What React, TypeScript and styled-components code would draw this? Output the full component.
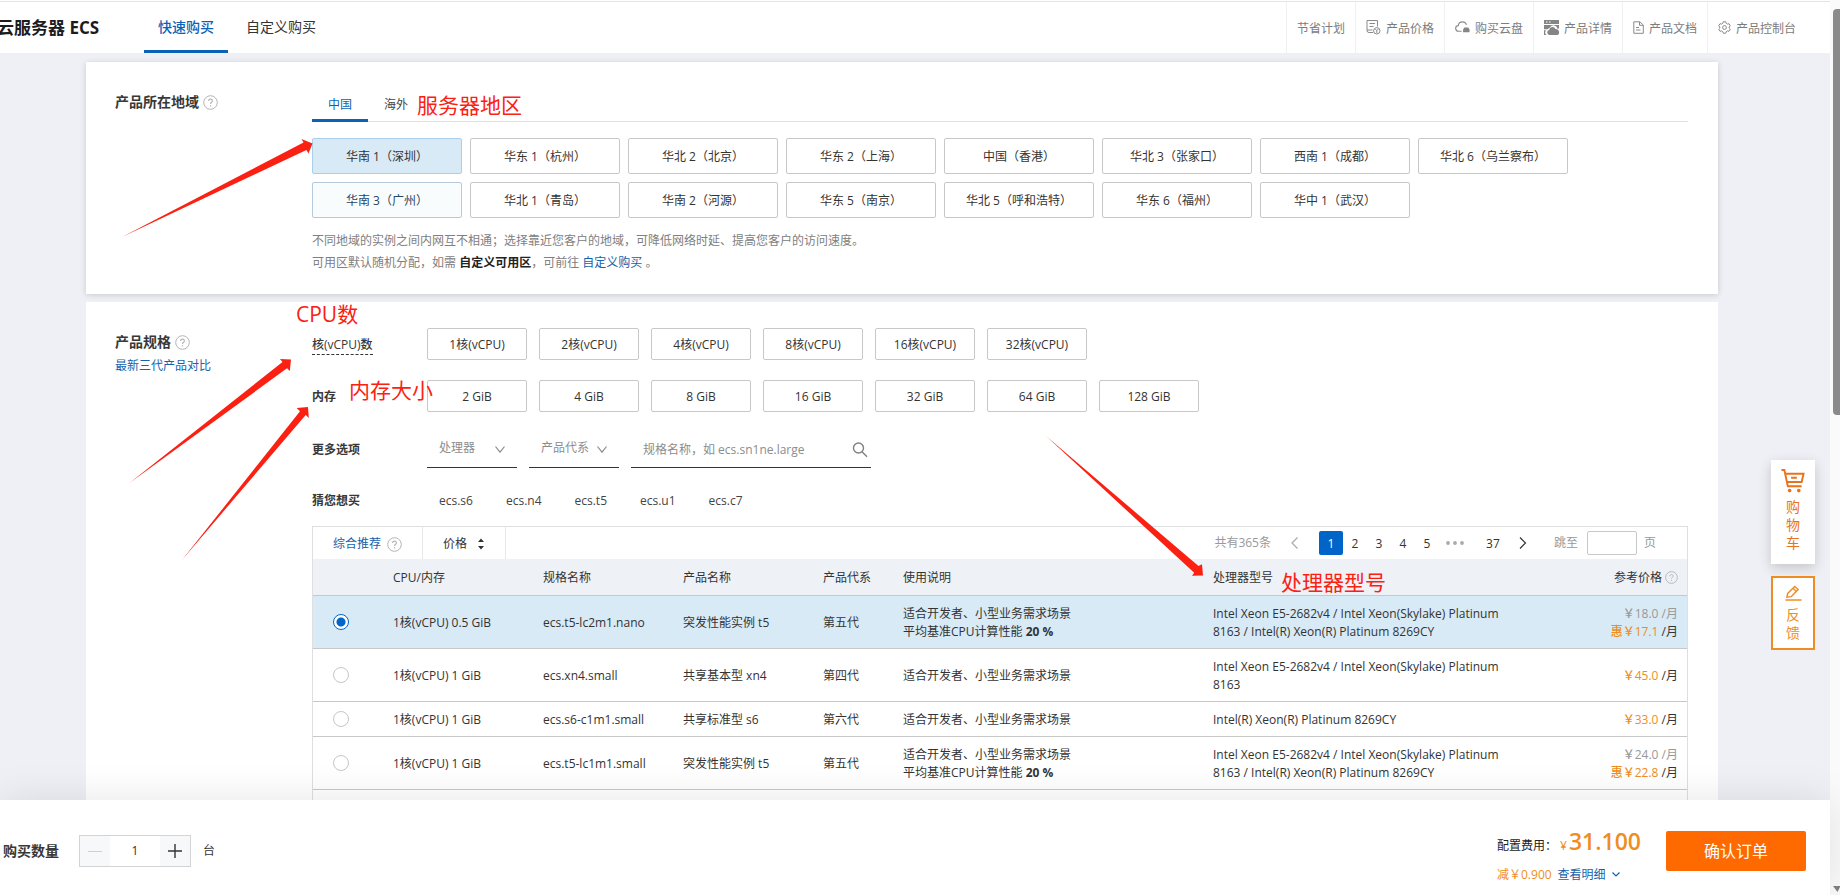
import React, { useState } from "react";
import styled, { createGlobalStyle, css } from "styled-components";

const color = {
  page: "#eff0f5",
  blue: "#0c62b5",
  link: "#1662ac",
  active: "#0064c8",
  orange: "#ff6a00",
  amber: "#ef8d22",
  red: "#fb2112",
  text: "#333333",
  muted: "#808080",
  border: "#c8c8c8",
  line: "#dedfe1",
  selected: "#d8eaf6",
};

const GlobalStyle = createGlobalStyle`
  * { box-sizing: border-box; }
  body {
    margin: 0;
    font: 12px/18px "Open Sans", "Noto Sans CJK SC", sans-serif;
    color: ${color.text};
    background: #ffffff;
  }
  button, input, select { font: inherit; color: inherit; }
  a { color: ${color.link}; text-decoration: none; }
`;

const Shell = styled.div`
  position: relative;
  display: grid;
  grid-template-columns: 1fr 10px;
  height: 100vh;
  overflow: hidden;
`;

const Page = styled.div`
  display: flex;
  flex-direction: column;
  min-width: 0;
  min-height: 0;
`;

/* ---------- header ---------- */

const Header = styled.header`
  display: flex;
  flex: none;
  height: 52px;
  margin-top: 1px;
  margin-bottom: -1px;
  border-top: 1px solid #e4e4e4;
  background: #fff;
  position: relative;
`;

const Title = styled.h1`
  width: 144px;
  margin: 0;
  font-size: 17px;
  line-height: 51px;
  font-weight: 700;
  color: #1c1c1c;
  white-space: nowrap;
  text-indent: -3px;
`;

const TopTabs = styled.nav`
  display: flex;
  gap: 4px;
  flex: 1;
`;

const TopTab = styled.a<{ $active?: boolean }>`
  padding: 0 14px;
  font-size: 14px;
  line-height: 50px;
  height: 51px;
  color: ${(p) => (p.$active ? color.blue : color.text)};
  font-weight: ${(p) => (p.$active ? 500 : 400)};
  border-bottom: 3px solid ${(p) => (p.$active ? color.blue : "transparent")};
`;

const TopLinks = styled.nav`
  display: flex;
  padding-right: 24px;
`;

const TopLink = styled.a`
  display: flex;
  align-items: center;
  gap: 5px;
  padding: 2px 10px 0;
  border-left: 1px solid #f0f0f0;
  color: #7c7c7c;
`;

const LinkIcon = styled.svg`
  flex: none;
  margin-bottom: 3px;
`;

/* ---------- cards ---------- */

const Main = styled.main`
  flex: 1;
  min-height: 0;
  overflow: hidden;
  display: flex;
  flex-direction: column;
  gap: 8px;
  padding: 10px 112px 0 86px;
  background: ${color.page};
`;

const Card = styled.section<{ $last?: boolean }>`
  display: grid;
  grid-template-columns: 197px minmax(0, 1fr);
  flex: none;
  padding: ${(p) => (p.$last ? "26px 30px 0 29px" : "28px 30px 20px 29px")};
  background: #fff;
  box-shadow: ${(p) => (p.$last ? "none" : "0 1px 6px rgba(0, 0, 0, 0.16)")};
`;

const CardSide = styled.div<{ $low?: boolean }>`
  padding-top: ${(p) => (p.$low ? 4 : 2)}px;
`;

const CardHeading = styled.h2`
  display: flex;
  align-items: center;
  gap: 4px;
  margin: 0;
  font-size: 14px;
  line-height: 20px;
  font-weight: 700;
  color: #383838;
`;

const SideLink = styled.a`
  display: block;
  margin-top: 5px;
`;

const RegionTabs = styled.div`
  display: flex;
  height: 32px;
  border-bottom: 1px solid ${color.line};
`;

const RegionTab = styled.button<{ $active?: boolean }>`
  width: 56px;
  height: 32px;
  padding: 0;
  border: 0;
  border-bottom: 3px solid ${(p) => (p.$active ? color.blue : "transparent")};
  background: none;
  color: ${(p) => (p.$active ? color.blue : "#444")};
`;

const RegionGrid = styled.div`
  display: grid;
  grid-template-columns: repeat(auto-fill, 150px);
  gap: 8px;
  margin-top: 16px;
`;

const optionButton = css`
  padding: 2px 0 0;
  border: 1px solid ${color.border};
  border-radius: 2px;
  background: #fff;
  color: #333;
`;

const RegionButton = styled.button<{ $state?: "on" | "hover" }>`
  ${optionButton}
  height: 36px;
  ${(p) =>
    p.$state === "on" &&
    css`
      background: ${color.selected};
      border-color: #a9cfea;
    `}
  ${(p) =>
    p.$state === "hover" &&
    css`
      background: #f9fcfd;
      border-color: #b5cbdd;
      color: #24466b;
    `}
`;

const Note = styled.div`
  margin-top: 12px;
  line-height: 22px;
  color: ${color.muted};
  p { margin: 0; }
  strong { color: #222; }
`;

/* ---------- spec filters ---------- */

const FilterRow = styled.div`
  display: grid;
  grid-template-columns: 115px minmax(0, 1fr);
  align-items: center;
  height: 32px;
  margin-bottom: 20px;
`;

const FilterName = styled.span`
  padding-top: 2px;
  font-weight: 600;
  color: #383838;
`;

const Dashed = styled.span`
  border-bottom: 1px dashed #333;
  font-weight: 500;
  padding-bottom: 1px;
`;

const Options = styled.div<{ $under?: boolean }>`
  display: flex;
  gap: 12px;
  ${(p) => p.$under && "align-self: end; margin-bottom: -2px;"}
`;

const SpecButton = styled.button`
  ${optionButton}
  width: 100px;
  height: 32px;
`;

const SelectBox = styled.label`
  position: relative;
  display: flex;
  width: 90px;
  height: 36px;
  border-bottom: 1px solid #333;
  svg {
    position: absolute;
    right: 12px;
    top: 14px;
    pointer-events: none;
  }
`;

const PlainSelect = styled.select`
  appearance: none;
  width: 100%;
  height: 32px;
  padding: 0 22px 0 12px;
  border: 0;
  background: none;
  color: #8c8c8c;
`;

const SearchBox = styled.label`
  display: flex;
  align-items: center;
  width: 240px;
  height: 36px;
  padding: 0 3px 0 12px;
  border-bottom: 1px solid #333;
  input {
    flex: 1;
    min-width: 0;
    padding: 0;
    border: 0;
    outline: 0;
    background: none;
  }
  input::placeholder { color: #8c8c8c; opacity: 1; }
`;

const Guess = styled.button`
  padding: 0;
  border: 0;
  background: none;
  color: #444;
`;

const Guesses = styled.div`
  display: flex;
  gap: 33px;
  padding: 2px 0 0 12px;
`;

/* ---------- product table ---------- */

const TableFrame = styled.div`
  margin-top: -10px;
  padding-bottom: 40px;
  border: 1px solid ${color.line};
  border-bottom: 0;
`;

const TableBar = styled.div`
  display: flex;
  height: 32px;
`;

const SortCell = styled.button<{ $active?: boolean }>`
  display: flex;
  align-items: center;
  gap: ${(p) => (p.$active ? 6 : 10)}px;
  padding: 2px 20px 0;
  border: 0;
  border-right: 1px solid #e6e7e9;
  background: none;
  color: ${(p) => (p.$active ? color.link : "#333")};
`;

const Pager = styled.nav`
  display: flex;
  align-items: center;
  margin-left: auto;
  padding-right: 31px;
  color: #999;
`;

const PageButton = styled.button<{ $active?: boolean }>`
  width: 24px;
  height: 24px;
  padding: 2px 0 0;
  border: 0;
  border-radius: 2px;
  background: ${(p) => (p.$active ? color.active : "none")};
  color: ${(p) => (p.$active ? "#fff" : "#333")};
  font-weight: 500;
`;

const StepButton = styled.button<{ $tight?: boolean }>`
  display: grid;
  place-items: center;
  width: 24px;
  height: 24px;
  margin: 0 ${(p) => (p.$tight ? 6 : 12)}px;
  padding: 0;
  border: 0;
  background: none;
`;

const Dots = styled.span`
  display: grid;
  place-items: center;
  width: 32px;
  margin-right: 10px;
`;

const JumpInput = styled.input`
  width: 50px;
  height: 24px;
  margin: 0 7px 0 9px;
  border: 1px solid ${color.border};
  border-radius: 2px;
`;

const Jump = styled.label`
  display: flex;
  align-items: center;
  margin-left: 13px;
`;

const ProductTable = styled.table`
  width: 100%;
  table-layout: fixed;
  border-collapse: collapse;
  th {
    height: 36px;
    padding: 2px 16px 0;
    background: #eef1f6;
    border-bottom: 1px solid ${color.border};
    font-weight: 400;
    text-align: left;
  }
  td {
    padding: 9px 16px 7px;
    border-bottom: 1px solid ${color.border};
    line-height: 18px;
  }
  th:last-child, td:last-child {
    padding-right: 9px;
    text-align: right;
  }
`;

const Row = styled.tr<{ $selected?: boolean }>`
  background: ${(p) => (p.$selected ? color.selected : "#fff")};
`;

const PickCell = styled.td`
  && { padding: 0 0 0 20px; }
`;

const Radio = styled.input`
  appearance: none;
  display: block;
  width: 16px;
  height: 16px;
  margin: 0;
  border: 1px solid #c4c6cc;
  border-radius: 50%;
  background: #fff;
  &:checked {
    border-color: ${color.active};
    background: radial-gradient(circle, ${color.active} 4px, #fff 5px);
  }
`;

const HeadEnd = styled.span`
  display: inline-flex;
  align-items: center;
  gap: 3px;
`;

const Price = styled.div<{ $old?: boolean }>`
  color: ${(p) => (p.$old ? "#999" : "#333")};
  b {
    font-weight: 500;
    color: ${(p) => (p.$old ? "#999" : color.amber)};
  }
`;

/* ---------- order bar ---------- */

const OrderBar = styled.footer`
  position: relative;
  z-index: 1;
  flex: none;
  display: flex;
  align-items: center;
  height: 95px;
  padding: 6px 24px 0 3px;
  background: #fff;
  box-shadow: 0 0 40px rgba(0, 0, 0, 0.1);
`;

const Quantity = styled.div`
  display: flex;
  align-items: center;
  label { font-size: 14px; font-weight: 600; color: #383838; }
`;

const Stepper = styled.div`
  display: grid;
  grid-template-columns: 30px 50px 30px;
  height: 32px;
  margin: 0 12px 0 20px;
  border: 1px solid #d3d4d6;
  button {
    display: grid;
    place-items: center;
    padding: 0;
    border: 0;
    background: #f7f8fa;
  }
  input {
    width: 100%;
    padding: 0;
    border: 0;
    text-align: center;
  }
`;

const Cost = styled.div`
  margin: 0 25px 0 auto;
  padding-top: 8px;
  width: 144px;
  white-space: nowrap;
`;

const CostLine = styled.div<{ $main?: boolean }>`
  display: flex;
  align-items: ${(p) => (p.$main ? "baseline" : "center")};
  gap: ${(p) => (p.$main ? 3 : 6)}px;
  margin-top: ${(p) => (p.$main ? 0 : 5)}px;
  line-height: ${(p) => (p.$main ? 30 : 18)}px;
  color: ${(p) => (p.$main ? "#222" : color.amber)};
  a { display: flex; align-items: center; gap: 6px; }
`;

const Total = styled.strong`
  font-weight: 500;
  color: ${color.amber};
  big { font-size: 23px; font-weight: 600; margin-left: 2px; }
`;

const Submit = styled.button`
  width: 140px;
  height: 40px;
  border: 0;
  border-radius: 2px;
  background: ${color.orange};
  color: #fff;
  font-size: 16px;
`;

/* ---------- scrollbar and side dock ---------- */

const ScrollTrack = styled.div`
  display: flex;
  flex-direction: column;
  align-items: flex-end;
  justify-content: space-between;
  padding: 9px 0 3px;
  background: #fafafa;
`;

const ScrollThumb = styled.div`
  width: 7px;
  height: 46%;
  border-radius: 4px 0 0 4px;
  background: #8a8a8a;
`;

const Dock = styled.aside`
  position: absolute;
  right: 25px;
  top: 460px;
  display: flex;
  flex-direction: column;
  gap: 12px;
  width: 44px;
`;

const DockItem = styled.button<{ $outlined?: boolean }>`
  display: flex;
  flex-direction: column;
  align-items: center;
  font-size: 14px;
  line-height: 18px;
  background: #fff;
  ${(p) =>
    p.$outlined
      ? css`
          height: 74px;
          padding: 7px 12px 6px;
          gap: 5px;
          border: 2px solid ${color.amber};
          color: ${color.amber};
        `
      : css`
          height: 104px;
          padding: 8px 14px 12px;
          gap: 5px;
          border: 0;
          color: #e8731c;
          box-shadow: 0 4px 12px rgba(0, 0, 0, 0.18);
        `}
`;

/* ---------- hand-made annotations lying over the page ---------- */

const Arrows = styled.svg`
  position: absolute;
  left: 0;
  top: 0;
  width: 1320px;
  height: 600px;
  pointer-events: none;
  z-index: 2;
`;

const Mark = styled.span<{ $x: number; $y: number }>`
  position: absolute;
  left: ${(p) => p.$x}px;
  top: ${(p) => p.$y}px;
  font-size: 21px;
  line-height: 28px;
  font-weight: 400;
  color: ${color.red};
  white-space: nowrap;
  z-index: 2;
`;

/* ---------- icons ---------- */

const Help = ({ size = 15 }: { size?: number }) => (
  <svg width={size} height={size} viewBox="0 0 15 15" fill="none" stroke="#b4b4b4">
    <circle cx="7.5" cy="7.5" r="6.8" />
    <path d="M5.6 6.1c0-1.2.8-2 1.9-2s1.9.7 1.9 1.8c0 1.3-1.9 1.5-1.9 3" strokeWidth="1.1" />
    <path d="M7.5 10.2v1.2" strokeWidth="1.2" />
  </svg>
);

const Chevron = ({ d, w = 10, h = 7, stroke = "#8c8c8c" }: { d: string; w?: number; h?: number; stroke?: string }) => (
  <svg width={w} height={h} viewBox={`0 0 ${w} ${h}`} fill="none" stroke={stroke} strokeWidth="1.2">
    <path d={d} />
  </svg>
);

const PriceIcon = () => (
  <LinkIcon width="15" height="16" viewBox="0 0 15 16" fill="none" stroke="#8a8a8a">
    <path d="M7 13.5H3a2 2 0 0 1-2-2V1.500h10.500v6M1 11h5.500M3.500 4.500h5.500M3.500 7.500h4" />
    <circle cx="10.800" cy="11.800" r="3.200" />
    <path d="M9.300 10l1.500 1.700 1.500-1.700M10.800 11.700v2.300" />
  </LinkIcon>
);

const CloudDiskIcon = () => (
  <LinkIcon width="15" height="14" viewBox="0 0 16 14" fill="none" stroke="#8a8a8a" strokeWidth="1.2">
    <path d="M7 11.500H4a3 3 0 0 1-.5-6C3.800 3 5.500 1.500 8 1.500c2.200 0 3.800 1.300 4.200 3.300" />
    <path d="M10 7.500h4l1.500 2.200v2.800H8.600V9.700z" fill="#858585" stroke="none" />
  </LinkIcon>
);

const DetailIcon = () => (
  <LinkIcon width="15" height="15" viewBox="0 0 15 15" fill="#858585">
    <path d="M0 0h15v4H0zM0 5h15v3.200l-1.500.8A4 4 0 0 0 6 7.500L3.500 9.200H0z" />
    <path d="M0 10.200h2.200A3 3 0 0 0 2.500 15H0zM5.500 15a2.600 2.600 0 0 1-.3-5.100A3.200 3.200 0 0 1 11.400 9 3 3 0 0 1 15 12v1.500A2 2 0 0 1 13 15z" />
    <path d="M2 2h1.500M5 2h1.500" stroke="#fff" />
  </LinkIcon>
);

const DocIcon = () => (
  <LinkIcon width="11" height="13" viewBox="0 0 11 13" fill="none" stroke="#8a8a8a">
    <path d="M.8.800h6L10.300 4v8.300H.8zM6.500 1v3.300h3.600M3 6.500h3M3 9h4.500" />
  </LinkIcon>
);

const GearIcon = () => (
  <LinkIcon width="13" height="13" viewBox="0 0 13 13" fill="none" stroke="#8a8a8a">
    <path d="M5.200.8h2.600l.4 1.500 1.300.8 1.500-.4 1.300 2.200L11.200 6v1l1.100 1.100-1.300 2.200-1.500-.4-1.300.8-.4 1.500H5.200l-.4-1.500-1.300-.8-1.500.4L.7 8.100 1.800 7V6L.7 4.900 2 2.700l1.500.4 1.300-.8z" />
    <circle cx="6.500" cy="6.500" r="1.900" />
  </LinkIcon>
);

const CartIcon = () => (
  <svg width="26" height="26" viewBox="0 0 26 26" fill="none" stroke="#e8731c" strokeWidth="2">
    <path d="M1 2h3l3.600 17H22M4.800 6H24l-2 8.500H6.800M11 10.200h6" />
    <circle cx="9.500" cy="23.500" r="1.900" fill="#e8731c" stroke="none" />
    <circle cx="19" cy="23.500" r="1.900" fill="#e8731c" stroke="none" />
  </svg>
);

const PencilIcon = () => (
  <svg width="17" height="17" viewBox="0 0 17 17" fill="none" stroke={color.amber} strokeWidth="1.500">
    <path d="M1.500 13l.8-4L9.800 1.500l3.700 3.300L6.200 12.300zM8 3.500l3.500 3.300M0 15.900h17" />
  </svg>
);

/* ---------- data ---------- */

const regions = [
  "华南 1（深圳）", "华东 1（杭州）", "华北 2（北京）", "华东 2（上海）",
  "中国（香港）", "华北 3（张家口）", "西南 1（成都）", "华北 6（乌兰察布）",
  "华南 3（广州）", "华北 1（青岛）", "华南 2（河源）", "华东 5（南京）",
  "华北 5（呼和浩特）", "华东 6（福州）", "华中 1（武汉）",
];
const cores = [1, 2, 4, 8, 16, 32];
const memory = [2, 4, 8, 16, 32, 64, 128];
const guesses = ["ecs.s6", "ecs.n4", "ecs.t5", "ecs.u1", "ecs.c7"];

const skylake = "Intel Xeon E5-2682v4 / Intel Xeon(Skylake) Platinum 8163";
const cascade = "Intel(R) Xeon(R) Platinum 8269CY";

const products = [
  { spec: "1核(vCPU) 0.5 GiB", id: "ecs.t5-lc2m1.nano", name: "突发性能实例 t5", gen: "第五代", base: "20 %", cpu: `${skylake} / ${cascade}`, price: "17.1", old: "18.0" },
  { spec: "1核(vCPU) 1 GiB", id: "ecs.xn4.small", name: "共享基本型 xn4", gen: "第四代", cpu: skylake, price: "45.0" },
  { spec: "1核(vCPU) 1 GiB", id: "ecs.s6-c1m1.small", name: "共享标准型 s6", gen: "第六代", cpu: cascade, price: "33.0" },
  { spec: "1核(vCPU) 1 GiB", id: "ecs.t5-lc1m1.small", name: "突发性能实例 t5", gen: "第五代", base: "20 %", cpu: `${skylake} / ${cascade}`, price: "22.8", old: "24.0" },
];

const topLinks = [
  { label: "节省计划" },
  { label: "产品价格", icon: <PriceIcon /> },
  { label: "购买云盘", icon: <CloudDiskIcon /> },
  { label: "产品详情", icon: <DetailIcon /> },
  { label: "产品文档", icon: <DocIcon /> },
  { label: "产品控制台", icon: <GearIcon /> },
];

export default function App() {
  const [region, setRegion] = useState(regions[0]);
  const [product, setProduct] = useState(products[0].id);
  const [count, setCount] = useState(1);

  return (
    <Shell>
      <GlobalStyle />
      <Page>
        <Header>
          <Title>云服务器 ECS</Title>
          <TopTabs>
            <TopTab href="#quick" $active>快速购买</TopTab>
            <TopTab href="#custom">自定义购买</TopTab>
          </TopTabs>
          <TopLinks>
            {topLinks.map((l) => (
              <TopLink key={l.label} href="#top">{l.icon}{l.label}</TopLink>
            ))}
          </TopLinks>
        </Header>

        <Main>
          <Card>
            <CardSide>
              <CardHeading>产品所在地域<Help /></CardHeading>
            </CardSide>
            <div>
              <RegionTabs>
                <RegionTab $active>中国</RegionTab>
                <RegionTab>海外</RegionTab>
              </RegionTabs>
              <RegionGrid>
                {regions.map((r) => (
                  <RegionButton
                    key={r}
                    onClick={() => setRegion(r)}
                    $state={r === region ? "on" : r.includes("广州") ? "hover" : undefined}
                  >
                    {r}
                  </RegionButton>
                ))}
              </RegionGrid>
              <Note>
                <p>不同地域的实例之间内网互不相通；选择靠近您客户的地域，可降低网络时延、提高您客户的访问速度。</p>
                <p>可用区默认随机分配，如需 <strong>自定义可用区</strong>，可前往 <a href="#custom">自定义购买</a> 。</p>
              </Note>
            </div>
          </Card>

          <Card $last>
            <CardSide $low>
              <CardHeading>产品规格<Help /></CardHeading>
              <SideLink href="#compare">最新三代产品对比</SideLink>
            </CardSide>
            <div>
              <FilterRow>
                <FilterName><Dashed>核(vCPU)数</Dashed></FilterName>
                <Options>{cores.map((c) => <SpecButton key={c}>{c}核(vCPU)</SpecButton>)}</Options>
              </FilterRow>
              <FilterRow>
                <FilterName>内存</FilterName>
                <Options>{memory.map((m) => <SpecButton key={m}>{m} GiB</SpecButton>)}</Options>
              </FilterRow>
              <FilterRow>
                <FilterName>更多选项</FilterName>
                <Options $under>
                  <SelectBox>
                    <PlainSelect aria-label="处理器"><option>处理器</option></PlainSelect>
                    <Chevron d="M.5.5L5 6.200 9.500.5" />
                  </SelectBox>
                  <SelectBox>
                    <PlainSelect aria-label="产品代系"><option>产品代系</option></PlainSelect>
                    <Chevron d="M.5.5L5 6.200 9.500.5" />
                  </SelectBox>
                  <SearchBox>
                    <input type="text" aria-label="规格名称" placeholder="规格名称，如 ecs.sn1ne.large" />
                    <svg width="16" height="16" viewBox="0 0 16 16" fill="none" stroke="#808080" strokeWidth="1.400">
                      <circle cx="6.500" cy="6" r="5" />
                      <path d="M10 9.700l5 5" />
                    </svg>
                  </SearchBox>
                </Options>
              </FilterRow>
              <FilterRow>
                <FilterName>猜您想买</FilterName>
                <Guesses>{guesses.map((g) => <Guess key={g}>{g}</Guess>)}</Guesses>
              </FilterRow>

              <TableFrame>
                <TableBar>
                  <SortCell $active>综合推荐<Help /></SortCell>
                  <SortCell>
                    价格
                    <svg width="8" height="12" viewBox="0 0 8 12" fill="#333"><path d="M1 4l3-3.500L7 4zM1 8h6l-3 3.500z" /></svg>
                  </SortCell>
                  <Pager>
                    共有365条
                    <StepButton aria-label="上一页"><Chevron w={7} h={12} d="M6.500.5L1 6l5.500 5.500" stroke="#aaa" /></StepButton>
                    <PageButton $active>1</PageButton>
                    {[2, 3, 4, 5].map((n) => <PageButton key={n}>{n}</PageButton>)}
                    <Dots>
                      <svg width="18" height="4" viewBox="0 0 18 4" fill="#aaa">
                        <circle cx="2" cy="2" r="1.900" /><circle cx="9" cy="2" r="1.900" /><circle cx="16" cy="2" r="1.900" />
                      </svg>
                    </Dots>
                    <PageButton>37</PageButton>
                    <StepButton $tight aria-label="下一页"><Chevron w={8} h={12} d="M1 .5L6.500 6 1 11.500" stroke="#333" /></StepButton>
                    <Jump>跳至<JumpInput type="text" />页</Jump>
                  </Pager>
                </TableBar>
                <ProductTable>
                  <colgroup>
                    <col width="64" /><col width="150" /><col width="140" /><col width="140" />
                    <col width="80" /><col width="310" /><col width="320" /><col />
                  </colgroup>
                  <thead>
                    <tr>
                      <th /><th>CPU/内存</th><th>规格名称</th><th>产品名称</th>
                      <th>产品代系</th><th>使用说明</th><th>处理器型号</th>
                      <th><HeadEnd>参考价格<Help size={13} /></HeadEnd></th>
                    </tr>
                  </thead>
                  <tbody>
                    {products.map((p) => (
                      <Row key={p.id} $selected={p.id === product}>
                        <PickCell>
                          <Radio
                            type="radio"
                            name="product"
                            aria-label={p.id}
                            checked={p.id === product}
                            onChange={() => setProduct(p.id)}
                          />
                        </PickCell>
                        <td>{p.spec}</td>
                        <td>{p.id}</td>
                        <td>{p.name}</td>
                        <td>{p.gen}</td>
                        <td>
                          适合开发者、小型业务需求场景
                          {p.base && <><br />平均基准CPU计算性能 <strong>{p.base}</strong></>}
                        </td>
                        <td>{p.cpu}</td>
                        <td>
                          {p.old && <Price $old><b>￥{p.old}</b> /月</Price>}
                          <Price><b>{p.old && "惠"}￥{p.price}</b> /月</Price>
                        </td>
                      </Row>
                    ))}
                  </tbody>
                </ProductTable>
              </TableFrame>
            </div>
          </Card>
        </Main>

        <OrderBar>
          <Quantity>
            <label htmlFor="count">购买数量</label>
            <Stepper>
              <button aria-label="减少" onClick={() => setCount(Math.max(1, count - 1))}>
                <svg width="14" height="14" stroke="#d0d0d0"><path d="M0 7.500h14" /></svg>
              </button>
              <input id="count" type="text" value={count} onChange={(e) => setCount(Number(e.target.value) || 1)} />
              <button aria-label="增加" onClick={() => setCount(count + 1)}>
                <svg width="14" height="14" stroke="#333" strokeWidth="1.400"><path d="M0 7h14M7 0v14" /></svg>
              </button>
            </Stepper>
            台
          </Quantity>
          <Cost>
            <CostLine $main>
              <span>配置费用：</span>
              <Total>¥<big>31.100</big></Total>
            </CostLine>
            <CostLine>
              <span>减￥0.900</span>
              <a href="#detail">查看明细<Chevron w={8} h={5} d="M.5.5L4 4 7.500.5" stroke={color.link} /></a>
            </CostLine>
          </Cost>
          <Submit>确认订单</Submit>
        </OrderBar>
      </Page>

      <ScrollTrack>
        <ScrollThumb />
        <svg width="7" height="6" viewBox="0 0 7 6" fill="#808080"><path d="M0 0h7v1L4.500 6z" /></svg>
      </ScrollTrack>

      <Dock>
        <DockItem><CartIcon /><span>购<br />物<br />车</span></DockItem>
        <DockItem $outlined><PencilIcon /><span>反<br />馈</span></DockItem>
      </Dock>

      <Arrows fill={color.red}>
        <path d="M122 237L303.500 142.500 301.500 139 312.500 143.500 308.500 153.500 306.400 150z" />
        <path d="M129.500 483L282.500 362 280 359 291 359.500 289.800 371 287 368.300z" />
        <path d="M182 560L300 411.300 296.600 408 308 407 308.800 418 305.700 415z" />
        <path d="M1046 436L1198.500 566 1202 564.300 1203 575.500 1192 575.700 1194.200 572.700z" />
      </Arrows>
      <Mark $x={417} $y={91}>服务器地区</Mark>
      <Mark $x={296} $y={300}>CPU数</Mark>
      <Mark $x={349} $y={376}>内存大小</Mark>
      <Mark $x={1281} $y={568}>处理器型号</Mark>
    </Shell>
  );
}
